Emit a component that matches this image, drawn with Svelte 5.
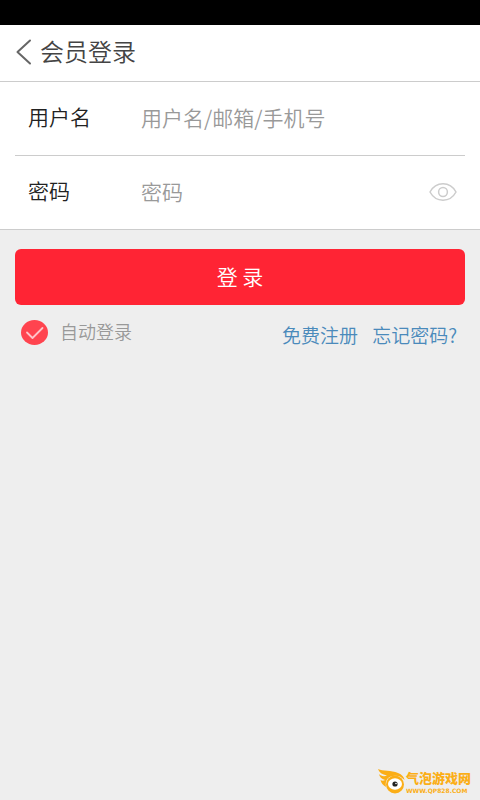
<script lang="ts">
	let username = $state('');
	let password = $state('');
	let showPassword = $state(false);
	let autoLogin = $state(true);
</script>

<div class="page">
	<div class="status-bar"></div>

	<header class="header">
		<button class="back" type="button" aria-label="返回">
			<svg width="16" height="26" viewBox="0 0 16 26" fill="none" stroke="#666" stroke-width="2" stroke-linecap="round" stroke-linejoin="round">
				<path d="M14 1.5 L1.5 13 L14 24.5" />
			</svg>
		</button>
		<h1>会员登录</h1>
	</header>

	<form onsubmit={(e) => e.preventDefault()}>
		<div class="fields">
			<div class="field">
				<label for="username">用户名</label>
				<input id="username" type="text" placeholder="用户名/邮箱/手机号" bind:value={username} />
			</div>
			<div class="field">
				<label for="password">密码</label>
				<input id="password" type={showPassword ? 'text' : 'password'} placeholder="密码" bind:value={password} />
				<button class="eye" type="button" aria-label="显示密码" onclick={() => (showPassword = !showPassword)}>
					<svg width="28" height="18" viewBox="0 0 28 18" fill="none" stroke="#ccc" stroke-width="1.5">
						<path d="M1 9 C4 3.5 8.5 .8 14 .8 S24 3.5 27 9 C24 14.5 19.5 17.2 14 17.2 S4 14.5 1 9 Z" />
						<circle cx="14" cy="9" r="4.4" />
					</svg>
				</button>
			</div>
		</div>

		<div class="actions">
			<button class="submit" type="submit">登 录</button>
			<div class="options">
				<label class="auto">
					<span class="tick">
						<input type="checkbox" bind:checked={autoLogin} />
						{#if autoLogin}
							<svg width="27" height="25" viewBox="0 0 27 25" fill="none">
								<path d="M6 12.5 L11.5 18 L21.5 8" stroke="#ffc4c8" stroke-width="1.8" stroke-linecap="round" stroke-linejoin="round" />
							</svg>
						{/if}
					</span>
					自动登录
				</label>
				<nav class="links">
					<a href="#register">免费注册</a>
					<a href="#forgot">忘记密码?</a>
				</nav>
			</div>
		</div>
	</form>

	<footer class="brand">
		<svg width="27" height="25" viewBox="0 0 27 25">
			<path d="M0 0 C5 2.5 13 1 20 4 C24 5.5 26 8 26.5 11 C23 7 19 6 15 7 C9 8 7 12 8 18 C5 16 3 14 2.5 11 C4 12 5.5 12 7 11 C3.5 10 1.5 8 1 5 C3 7 6 8 9 6.5 C4 5.5 1 3.5 0 0 Z" fill="#fbae17" />
			<circle cx="17" cy="15.5" r="9" fill="#fbae17" />
			<ellipse cx="17" cy="15" rx="7" ry="5.8" fill="#fff" />
			<circle cx="17" cy="15" r="2.6" fill="#222" />
			<circle cx="18" cy="14.5" r=".8" fill="#fff" />
		</svg>
		<div class="brand-text">
			<span class="brand-name">气泡游戏网</span>
			<span class="brand-url">WWW.QP828.COM</span>
		</div>
	</footer>
</div>

<style>
	:global(body) { background: #eee; }

	.page {
		display: flex;
		flex-direction: column;
		min-height: 100vh;
		background: #eee;
		color: #222;
		font-family: "Noto Sans CJK SC", sans-serif;
		font-size: 21px;
		font-weight: 350;
		line-height: 30px;
	}

	button, input { font: inherit; margin: 0; padding: 0; border: 0; background: none; }
	button { cursor: pointer; }
	svg { display: block; }

	.status-bar { height: 25px; background: #000; }

	.header {
		display: flex;
		align-items: center;
		gap: 8px;
		height: 56px;
		padding: 0 16px;
		background: #fff;
		border-bottom: 1px solid #ccc;
	}

	.back { padding-bottom: 2px; }
	h1 { margin: 0; padding-bottom: 4px; font-size: 24px; font-weight: 350; line-height: 36px; color: #444; }

	.fields { padding: 0 15px; background: #fff; border-bottom: 1px solid #ccc; }

	.field {
		display: flex;
		align-items: center;
		height: 73px;
		padding: 0 8px 0 13px;
	}

	.field + .field { border-top: 1px solid #ccc; }
	.field label { width: 113px; padding-bottom: 6px; }
	.field input { flex: 1; min-width: 0; height: 30px; padding-bottom: 4px; outline: none; color: #222; }
	.field input::placeholder { color: #999; opacity: 1; }
	.eye { padding-bottom: 2px; }

	.actions { padding: 19px 15px; }

	.submit {
		display: block;
		width: 100%;
		height: 56px;
		padding-bottom: 2px;
		border-radius: 6px;
		background: #ff2434;
		color: #fff;
	}

	.options {
		display: flex;
		align-items: flex-start;
		justify-content: space-between;
		padding: 11px 8px 0 6px;
	}

	.auto { display: flex; align-items: center; gap: 12px; font-size: 18px; color: #999; }
	.tick { display: grid; padding-top: 2px; }
	.tick input { grid-area: 1 / 1; appearance: none; width: 27px; height: 25px; border-radius: 50%; background: #ccc; }
	.tick input:checked { background: #ff444f; }
	.tick svg { grid-area: 1 / 1; pointer-events: none; }

	.links { display: flex; gap: 14px; padding-top: 4px; font-size: 19px; }
	.links a { color: #4a8abb; text-decoration: none; }

	.brand { display: flex; align-items: center; align-self: flex-end; gap: 1px; margin-top: auto; padding: 0 9px 6px 0; color: #fbae17; }
	.brand-text { display: flex; flex-direction: column; }
	.brand-name { font-size: 13px; font-weight: 900; line-height: 19px; }
	.brand-url { font-family: "DejaVu Sans", sans-serif; font-size: 6px; font-weight: 700; line-height: 7px; }
</style>
